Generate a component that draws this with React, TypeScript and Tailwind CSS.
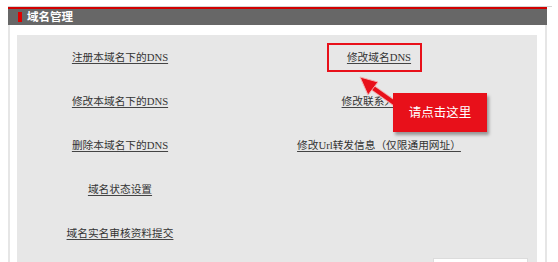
import React from "react";

const linkCls =
  "text-[10.7px] leading-none text-[#333] underline underline-offset-[2px] decoration-[#444] whitespace-nowrap";
const fontStack = { fontFamily: '"Liberation Serif", "Noto Sans CJK SC", serif' };

function Row({ left, right }: { left?: string; right?: string }) {
  return (
    <div className="flex h-[44px] items-center">
      <div className="w-[206px] flex justify-center">
        {left && (
          <span className={linkCls} style={fontStack}>
            {left}
          </span>
        )}
      </div>
      <div className="w-[312px] flex justify-center">
        {right && (
          <span className={linkCls} style={fontStack}>
            {right}
          </span>
        )}
      </div>
    </div>
  );
}

export default function App() {
  return (
    <div className="relative w-[558px] h-[262px] bg-white overflow-hidden">
      <div className="pt-[6px] pl-[8px]">
        <div className="w-[544px] h-px bg-[#d4d4d4]" />
        <div className="w-[539px]">
          <div className="h-[2px] bg-[#d10000]" />
          <div className="h-[16px] bg-[#676767] flex items-center pl-[10px] gap-[5px]">
            <div className="w-[4px] h-[10px] bg-[#e00000]" />
            <span
              className="text-white font-bold text-[11.5px] leading-none"
              style={{ fontFamily: '"Noto Sans CJK SC", sans-serif' }}
            >
              域名管理
            </span>
          </div>
          <div className="border-x-2 border-[#e6e6e6] pt-[10px] pl-[7px] pr-[8px] h-[240px]">
            <div className="bg-[#e7e7e7] h-[230px]">
              <Row left="注册本域名下的DNS" right="修改域名DNS" />
              <Row left="修改本域名下的DNS" right="修改联系人信息" />
              <Row left="删除本域名下的DNS" right="修改Url转发信息（仅限通用网址）" />
              <Row left="域名状态设置" />
              <Row left="域名实名审核资料提交" />
              <div className="flex justify-end pr-[9px] pt-[3px]">
                <div className="w-[95px] h-[20px] bg-white border border-[#dcdcdc]" />
              </div>
            </div>
          </div>
        </div>
      </div>

      {/* annotation: red box */}
      <div className="absolute left-[327px] top-[43px] w-[95px] h-[29px] border-2 border-[#e8101a]" />

      {/* annotation: arrow */}
      <svg className="absolute left-0 top-0" width="558" height="262" viewBox="0 0 558 262">
        <g strokeLinejoin="round">
          <line x1="366" y1="83" x2="400" y2="107" stroke="#f4b0b0" strokeWidth="6" strokeLinecap="round" />
          <line x1="366" y1="83" x2="400" y2="107" stroke="#e8101a" strokeWidth="4" strokeLinecap="round" />
          <polygon points="360,77 378,82 368,95" fill="#e8101a" stroke="#f4b0b0" strokeWidth="1" />
        </g>
      </svg>

      {/* annotation: callout */}
      <div className="absolute left-[393px] top-[93px] w-[94px] h-[39px] bg-[#e8101a] shadow-[2px_3px_3px_rgba(0,0,0,0.35)] flex items-center justify-center">
        <span
          className="text-white text-[12.5px] leading-none"
          style={{ fontFamily: '"Noto Sans CJK SC", sans-serif' }}
        >
          请点击这里
        </span>
      </div>
    </div>
  );
}
